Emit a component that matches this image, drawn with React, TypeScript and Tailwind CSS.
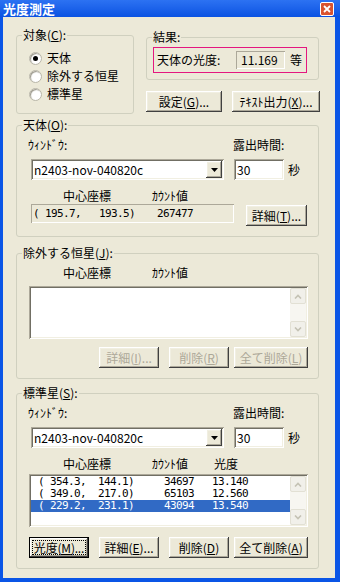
import React from "react";

const jp = "font-['Noto_Sans_CJK_JP',sans-serif]";
const mono = "font-['DejaVu_Sans_Mono',monospace] text-[11px] tracking-[-0.62px] leading-[12px]";

const raised =
  "shadow-[inset_-1px_-1px_0_#404040,inset_1px_1px_0_#ffffff,inset_-2px_-2px_0_#aca899,inset_2px_2px_0_#f1efe2]";
const sunken =
  "shadow-[inset_1px_1px_0_#aca899,inset_-1px_-1px_0_#ffffff,inset_2px_2px_0_#716f64,inset_-2px_-2px_0_#f1efe2]";
const staticEdge = "shadow-[inset_1px_1px_0_#aca899,inset_-1px_-1px_0_#ffffff]";

function Group({ label, className, children }: { label: React.ReactNode; className: string; children?: React.ReactNode }) {
  return (
    <fieldset className={`border border-[#D0D0BF] rounded-[3px] ${className}`}>
      <legend className="ml-[5px] px-[1px] text-[12px] leading-[14px]">{label}</legend>
      {children}
    </fieldset>
  );
}

function Btn({ w, children, disabled, isDefault }: { w: string; children: React.ReactNode; disabled?: boolean; isDefault?: boolean }) {
  if (isDefault) {
    return (
      <div className={`${w} h-[21px] flex p-[2px] border border-black bg-[#ECE9D8] ${raised}`}>
        <div className="flex-1 flex items-center justify-center border border-dotted border-black text-[12px] leading-none whitespace-nowrap tracking-[-0.2px]">
          {children}
        </div>
      </div>
    );
  }
  return (
    <div
      className={`${w} h-[21px] flex items-center justify-center bg-[#ECE9D8] text-[12px] leading-none whitespace-nowrap ${raised} ${
        disabled ? "text-[#ACA899]" : "text-black"
      }`}
    >
      {children}
    </div>
  );
}

function Radio({ checked, label }: { checked?: boolean; label: string }) {
  return (
    <div className="flex items-center h-[18px]">
      <div className="w-[13px] h-[13px] rounded-full bg-white border border-[#B9B6A8] shadow-[inset_1px_1px_1px_#9a978a] flex items-center justify-center">
        {checked && <div className="w-[5px] h-[5px] rounded-full bg-black" />}
      </div>
      <span className="ml-[5px]">{label}</span>
    </div>
  );
}

function Combo() {
  return (
    <div className={`w-[193px] h-[21px] bg-white ${sunken} flex items-center pl-[3px] pr-[2px]`}>
      <span className="flex-1">n2403-nov-040820c</span>
      <div className={`w-[16px] h-[17px] bg-[#ECE9D8] ${raised} flex items-center justify-center`}>
        <svg width="7" height="4" viewBox="0 0 7 4">
          <path d="M0 0h7L3.5 4z" fill="#000" />
        </svg>
      </div>
    </div>
  );
}

function WindowRow() {
  return (
    <div className="flex">
      <div className="flex flex-col">
        <span className="ml-[11px] h-[14px]">ｳｨﾝﾄﾞｳ:</span>
        <div className="ml-[14px] mt-[7px]">
          <Combo />
        </div>
      </div>
      <div className="flex flex-col ml-[9px]">
        <span className="h-[14px]">露出時間:</span>
        <div className="flex items-center mt-[7px] ml-[1px]">
          <div className={`w-[50px] h-[21px] bg-white ${sunken} flex items-center pl-[3px]`}>30</div>
          <span className="ml-[4px]">秒</span>
        </div>
      </div>
    </div>
  );
}

function ScrollBtn({ up }: { up?: boolean }) {
  return (
    <div className="h-[16px] w-[16px] rounded-[2px] border border-[#E2E0D4] bg-[#F1F0EA] flex items-center justify-center">
      <svg width="8" height="5" viewBox="0 0 8 5">
        <path d={up ? "M1 4.5L4 1.5L7 4.5" : "M1 0.5L4 3.5L7 0.5"} stroke="#C4C2B4" strokeWidth="1.6" fill="none" />
      </svg>
    </div>
  );
}

function VScroll() {
  return (
    <div className="w-[16px] flex flex-col bg-[#F7F6F1]">
      <ScrollBtn up />
      <div className="flex-1" />
      <ScrollBtn />
    </div>
  );
}

const stars = [
  { pos: "( 354.3,  144.1)", count: "34697", mag: "13.140" },
  { pos: "( 349.0,  217.0)", count: "65103", mag: "12.560" },
  { pos: "( 229.2,  231.1)", count: "43094", mag: "13.540", sel: true },
];

export default function App() {
  return (
    <div className={`w-[340px] h-[582px] bg-[#0A55E6] flex flex-col text-[12px] leading-[14px] text-black ${jp}`}>
      <div className="h-[17px] flex items-center pl-[3px] pr-[6px] bg-linear-to-b from-[#2C72F2] to-[#0A52E2]">
        <span className="text-white font-bold text-[13px] leading-none">光度測定</span>
        <div className="ml-auto w-[14px] h-[14px] rounded-[2px] border border-white bg-[#D9532F] flex items-center justify-center">
          <svg width="8" height="8" viewBox="0 0 8 8">
            <path d="M1 1L7 7M7 1L1 7" stroke="#fff" strokeWidth="1.8" />
          </svg>
        </div>
      </div>

      <div className="flex-1 ml-[3px] mr-[5px] mb-[4px] bg-[#ECE9D8] pl-[13px] flex flex-col">
        <div className="flex items-start mt-[11px]">
          <Group label={<>対象(<u>C</u>):</>} className="w-[118px] h-[86px]">
            <div className="mt-[7px] pl-[12px]">
              <Radio checked label="天体" />
              <Radio label="除外する恒星" />
              <Radio label="標準星" />
            </div>
          </Group>
          <div className="ml-[12px] w-[174px] flex flex-col">
            <Group label="結果:" className="mt-[2px] w-[173px] h-[50px]">
              <div className="mt-[3px] ml-[6px] w-[154px] h-[26px] border border-[#E4177F] flex items-center pl-[3px]">
                <span className="w-[79px]">天体の光度:</span>
                <div className={`w-[49px] h-[18px] ${staticEdge} flex items-center pl-[5px]`}>11.169</div>
                <span className="ml-[5px]">等</span>
              </div>
            </Group>
            <div className="flex mt-[11px]">
              <Btn w="w-[76px]">
                設定(<u>G</u>)...
              </Btn>
              <div className="ml-[10px]">
                <Btn w="w-[88px]">
                  ﾃｷｽﾄ出力(<u>X</u>)...
                </Btn>
              </div>
            </div>
          </div>
        </div>

        <Group label={<>天体(<u>O</u>):</>} className="mt-[4px] w-[303px] h-[119px]">
          <div className="mt-[6px]">
            <WindowRow />
            <div className="flex mt-[9px] h-[14px]">
              <span className="ml-[46px] w-[89px]">中心座標</span>
              <span>ｶｳﾝﾄ値</span>
            </div>
            <div className="flex items-start mt-[1px]">
              <div className={`ml-[14px] w-[203px] h-[19px] ${staticEdge} flex items-center`}>
                <span className={`${mono} w-[126px] pl-[2px] whitespace-pre`}>( 195.7,   193.5)</span>
                <span className={mono}>267477</span>
              </div>
              <div className="ml-[12px] mt-[1px]">
                <Btn w="w-[61px]">
                  詳細(<u>T</u>)...
                </Btn>
              </div>
            </div>
          </div>
        </Group>

        <Group label={<>除外する恒星(<u>J</u>):</>} className="mt-[9px] w-[303px] h-[133px]">
          <div className="mt-[6px]">
            <div className="flex h-[14px]">
              <span className="ml-[46px] w-[89px]">中心座標</span>
              <span>ｶｳﾝﾄ値</span>
            </div>
            <div className={`mt-[6px] ml-[12px] w-[279px] h-[53px] bg-white ${sunken} p-[2px] flex`}>
              <div className="flex-1" />
              <VScroll />
            </div>
            <div className="mt-[8px] w-[291px] flex justify-end">
              <Btn w="w-[60px]" disabled>
                詳細(<u>I</u>)...
              </Btn>
              <div className="ml-[10px]">
                <Btn w="w-[60px]" disabled>
                  削除(<u>R</u>)
                </Btn>
              </div>
              <div className="ml-[5px]">
                <Btn w="w-[74px]" disabled>
                  全て削除(<u>L</u>)
                </Btn>
              </div>
            </div>
          </div>
        </Group>

        <Group label={<>標準星(<u>S</u>):</>} className="mt-[7px] w-[303px] h-[183px]">
          <div className="mt-[6px]">
            <WindowRow />
            <div className="flex mt-[9px] h-[14px]">
              <span className="ml-[46px] w-[89px]">中心座標</span>
              <span className="w-[62px]">ｶｳﾝﾄ値</span>
              <span>光度</span>
            </div>
            <div className={`mt-[3px] ml-[12px] w-[279px] h-[53px] bg-white ${sunken} p-[2px] flex`}>
              <div className="flex-1 flex flex-col">
                {stars.map((s) => (
                  <div
                    key={s.pos}
                    className={`h-[12px] flex items-center ${mono} ${s.sel ? "bg-[#316AC5] text-white" : ""}`}
                  >
                    <span className="w-[133px] pl-[7px] whitespace-pre">{s.pos}</span>
                    <span className="w-[48px]">{s.count}</span>
                    <span>{s.mag}</span>
                  </div>
                ))}
              </div>
              <VScroll />
            </div>
            <div className="mt-[10px] ml-[12px] flex">
              <Btn w="w-[60px]" isDefault>
                光度(<u>M</u>)...
              </Btn>
              <div className="ml-[10px]">
                <Btn w="w-[60px]">
                  詳細(<u>E</u>)...
                </Btn>
              </div>
              <div className="ml-[10px]">
                <Btn w="w-[60px]">
                  削除(<u>D</u>)
                </Btn>
              </div>
              <div className="ml-[5px]">
                <Btn w="w-[74px]">
                  全て削除(<u>A</u>)
                </Btn>
              </div>
            </div>
          </div>
        </Group>
      </div>
    </div>
  );
}
